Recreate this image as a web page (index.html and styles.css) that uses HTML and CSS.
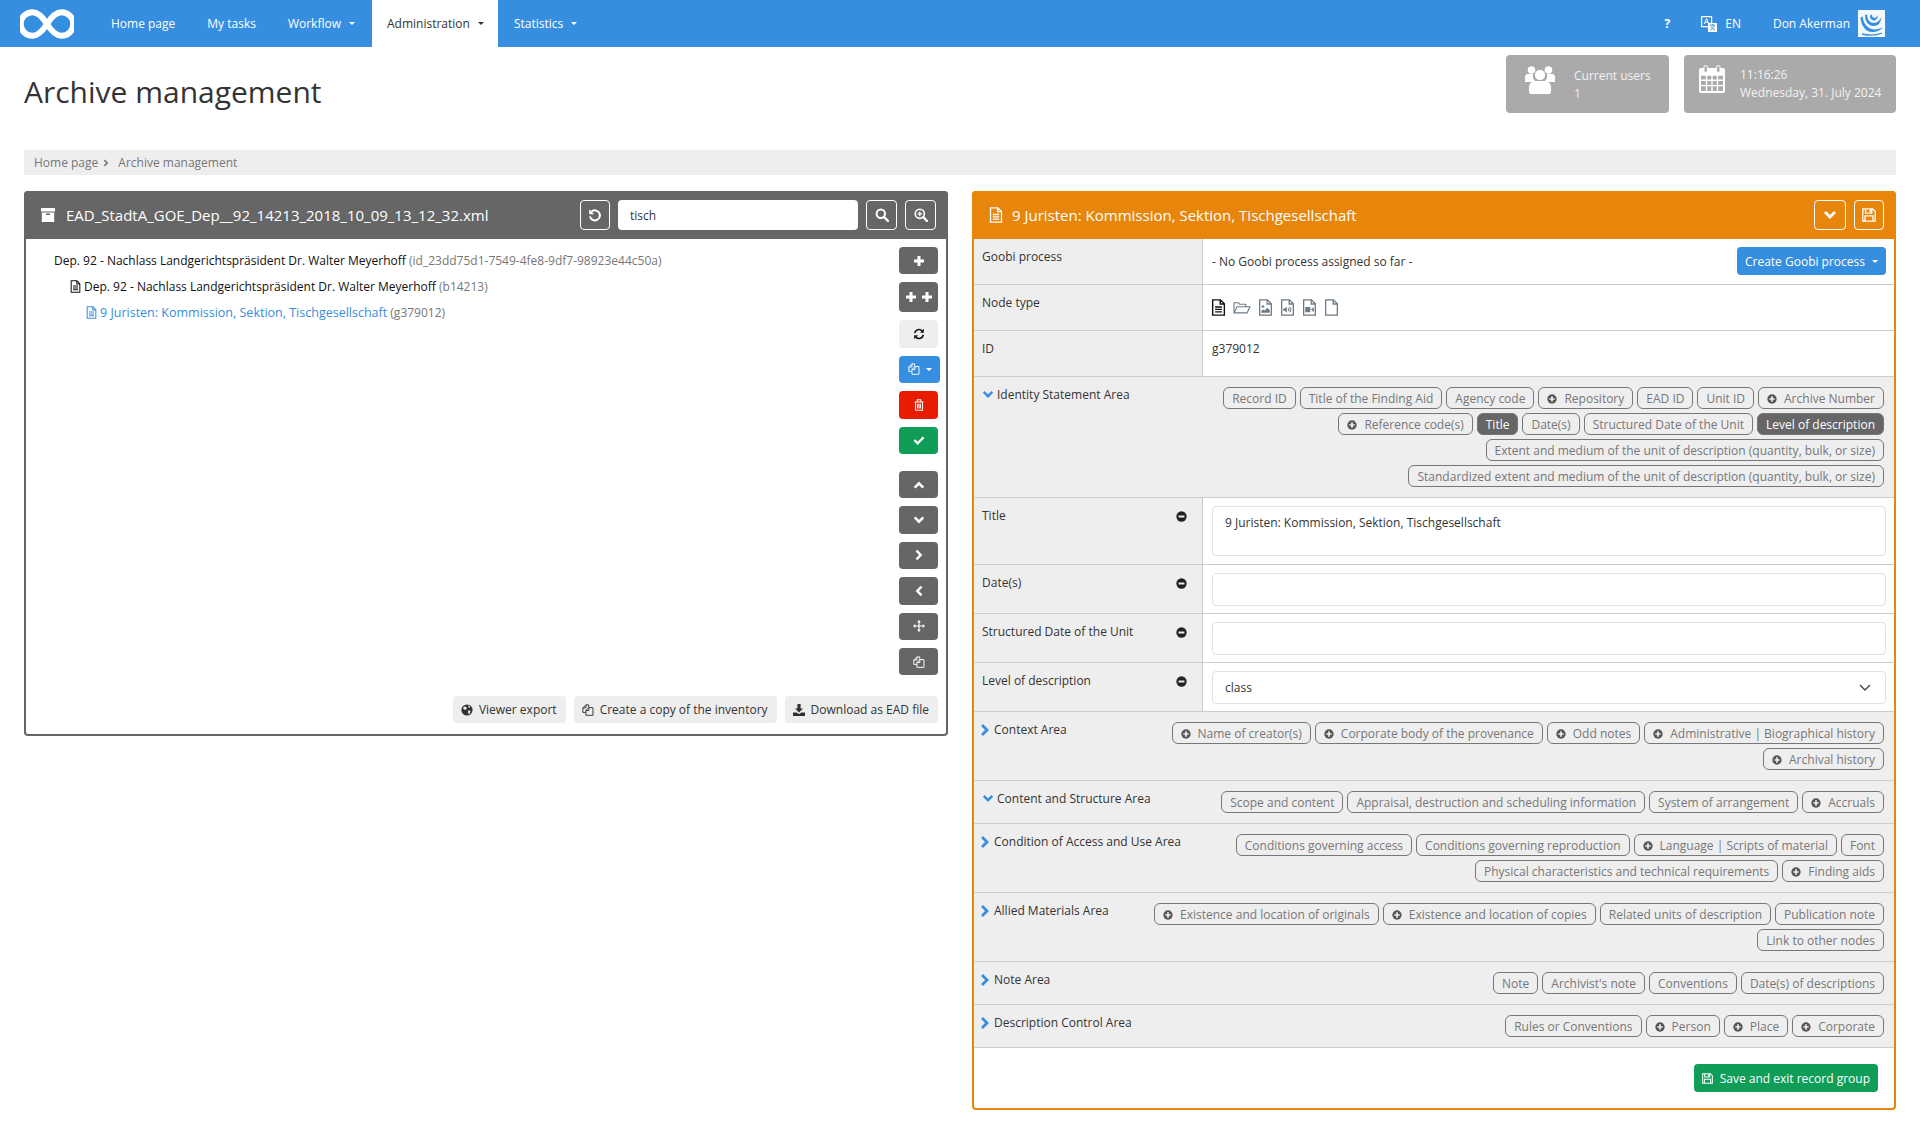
FILE: index.html
```html
<!DOCTYPE html>
<html lang="en">

<head>
    <meta charset="utf-8">
    <title>Archive management</title>
    <link rel="stylesheet" href="styles.css">
</head>

<body>
    <!-- Icons -->
    <svg class="sprite" xmlns="http://www.w3.org/2000/svg">
        <symbol id="i-doc" viewBox="0 0 14 16"><path d="M1.5.8h7.3l3.7 3.7v10.7h-11zM8.6.8v3.9h3.9M3.8 7.5h6.4M3.8 9.8h6.4M3.8 12.1h6.4" fill="none" stroke="currentColor" stroke-width="1.3"/></symbol>
        <symbol id="i-file" viewBox="0 0 14 16"><path d="M1.5.8h7.3l3.7 3.7v10.7h-11zM8.6.8v3.9h3.9" fill="none" stroke="currentColor" stroke-width="1.2"/></symbol>
        <symbol id="i-image" viewBox="0 0 14 16"><path d="M1.5.8h7.3l3.7 3.7v10.7h-11zM8.6.8v3.9h3.9" fill="none" stroke="currentColor" stroke-width="1.2"/><circle cx="4.6" cy="7" r="1.2" fill="currentColor"/><path d="M3 13v-1.6l2-1.6 1.4 1 2.4-2.6 2.2 2.4V13z" fill="currentColor"/></symbol>
        <symbol id="i-audio" viewBox="0 0 14 16"><path d="M1.5.8h7.3l3.7 3.7v10.7h-11zM8.6.8v3.9h3.9" fill="none" stroke="currentColor" stroke-width="1.2"/><path d="M3 9h1.4L6.4 7v6l-2-2H3z" fill="currentColor"/><path d="M7.6 8.6a2 2 0 010 2.8M9 7.6a3.6 3.6 0 010 4.8" fill="none" stroke="currentColor"/></symbol>
        <symbol id="i-video" viewBox="0 0 14 16"><path d="M1.5.8h7.3l3.7 3.7v10.7h-11zM8.6.8v3.9h3.9" fill="none" stroke="currentColor" stroke-width="1.2"/><path d="M3 7.5h4.8v5H3zM8.4 9.8L11 7.5v5z" fill="currentColor"/></symbol>
        <symbol id="i-folder" viewBox="0 0 18 14"><path d="M1 12V2.2h4.4l1.4 1.6h6v2.4M1 12.4l3-6.2h13l-3 6.2z" fill="none" stroke="currentColor" stroke-width="1.1" stroke-linejoin="round"/></symbol>
        <symbol id="i-archive" viewBox="0 0 14 14"><path d="M0 0h14v3.4H0zM.8 4.4h12.4V14H.8z" fill="currentColor"/><path d="M5 6.2h4" stroke="#666" stroke-width="1.4"/></symbol>
        <symbol id="i-undo" viewBox="0 0 14 14"><path d="M3.6 3.6A5 5 0 112 8.4" fill="none" stroke="currentColor" stroke-width="2"/><path d="M1.2 1.2v5h5z" fill="currentColor"/></symbol>
        <symbol id="i-search" viewBox="0 0 14 14"><circle cx="5.8" cy="5.8" r="4.2" fill="none" stroke="currentColor" stroke-width="2"/><path d="M9 9l4 4" stroke="currentColor" stroke-width="2.4" stroke-linecap="round"/></symbol>
        <symbol id="i-zoom" viewBox="0 0 14 14"><circle cx="5.8" cy="5.8" r="4.6" fill="none" stroke="currentColor" stroke-width="1.6"/><path d="M9.2 9.2l3.8 3.8" stroke="currentColor" stroke-width="2.4" stroke-linecap="round"/><path d="M3.4 5.8h4.8M5.8 3.4v4.8" stroke="currentColor" stroke-width="1.3"/></symbol>
        <symbol id="i-plus" viewBox="0 0 12 12"><path d="M6 1v10M1 6h10" stroke="currentColor" stroke-width="3"/></symbol>
        <symbol id="i-sync" viewBox="0 0 14 14"><path d="M2 6a5 5 0 018.6-2.6M12 8a5 5 0 01-8.6 2.6" fill="none" stroke="currentColor" stroke-width="2"/><path d="M12.6 1v4.4H8.2zM1.4 13V8.6h4.4z" fill="currentColor"/></symbol>
        <symbol id="i-copy" viewBox="0 0 14 14"><path d="M4.6 1L1 4.6v5.2h3.6M4.6 1h3.2v3M4.6 1v3.6H1M8 4.2L4.6 7.6v5.6h8.2V4.2zM8 4.2v3.4H4.6" fill="none" stroke="currentColor" stroke-width="1.1" stroke-linejoin="round"/></symbol>
        <symbol id="i-trash" viewBox="0 0 12 14"><path d="M2 4v9h8V4M.8 3.4h10.4M4 3V1h4v2M4.4 5.4v5.6M6 5.4v5.6M7.6 5.4v5.6" fill="none" stroke="currentColor" stroke-width="1.2"/></symbol>
        <symbol id="i-check" viewBox="0 0 14 12"><path d="M1.6 6l3.8 3.8 7-7" fill="none" stroke="currentColor" stroke-width="2.8"/></symbol>
        <symbol id="i-up" viewBox="0 0 14 10"><path d="M2 8l5-5 5 5" fill="none" stroke="currentColor" stroke-width="2.8"/></symbol>
        <symbol id="i-down" viewBox="0 0 14 10"><path d="M2 2l5 5 5-5" fill="none" stroke="currentColor" stroke-width="2.8"/></symbol>
        <symbol id="i-right" viewBox="0 0 10 14"><path d="M2 2l5 5-5 5" fill="none" stroke="currentColor" stroke-width="2.8"/></symbol>
        <symbol id="i-left" viewBox="0 0 10 14"><path d="M8 2L3 7l5 5" fill="none" stroke="currentColor" stroke-width="2.8"/></symbol>
        <symbol id="i-move" viewBox="0 0 14 14"><path d="M7 2v10M2 7h10" stroke="currentColor" stroke-width="1.4"/><path d="M7 0l2.2 2.6H4.8zM7 14l2.2-2.6H4.8zM0 7l2.6-2.2v4.4zM14 7l-2.6-2.2v4.4z" fill="currentColor"/></symbol>
        <symbol id="i-globe" viewBox="0 0 12 12"><circle cx="6" cy="6" r="5.6" fill="currentColor"/><path d="M3 2.4l2.4.6.4 1.8L4.2 6 2 4.6zM7 6.4l2.6.4-.8 2.6-1.4.8zM7.4 1.6l2 1-.8 1.2-1.2-.6z" fill="#eee"/></symbol>
        <symbol id="i-download" viewBox="0 0 12 12"><path d="M4.4 0h3.2v4.4h2.4L6 8.4 2 4.4h2.4zM0 8.6h3.4L6 10l2.6-1.4H12V12H0z" fill="currentColor"/></symbol>
        <symbol id="i-minus" viewBox="0 0 12 12"><circle cx="6" cy="6" r="5.6" fill="currentColor"/><path d="M2.8 4.9h6.4v2.2H2.8z" fill="#eee"/></symbol>
        <symbol id="i-add" viewBox="0 0 12 12"><circle cx="6" cy="6" r="5.6" fill="currentColor"/><path d="M2.8 5h6.4v2H2.8zM5 2.8h2v6.4H5z" fill="#eee"/></symbol>
        <symbol id="i-save" viewBox="0 0 12 12"><path d="M.7.7h8.4l2.2 2.2v8.4H.7zM3 .9v3.4h5.4V.9M2.6 11V6.8h6.8V11" fill="none" stroke="currentColor" stroke-width="1.1"/><path d="M6.4 1.6h1.2v2H6.4z" fill="currentColor"/></symbol>
        <symbol id="i-users" viewBox="0 0 30 29"><circle cx="6.5" cy="5" r="3.8" fill="currentColor"/><circle cx="23.5" cy="5" r="3.8" fill="currentColor"/><path d="M0 17v-5a3 3 0 013-3h5a8 8 0 002 7l-1 1zM30 17v-5a3 3 0 00-3-3h-5a8 8 0 01-2 7l1 1z" fill="currentColor"/><circle cx="15" cy="10" r="5.6" fill="currentColor" stroke="#aaa"/><path d="M4 27v-5a6 6 0 016-6h10a6 6 0 016 6v5a2 2 0 01-2 2H6a2 2 0 01-2-2z" fill="currentColor"/></symbol>
        <symbol id="i-calendar" viewBox="0 0 26 28"><path d="M2 3h22a2 2 0 012 2v21a2 2 0 01-2 2H2a2 2 0 01-2-2V5a2 2 0 012-2z" fill="currentColor"/><path d="M2 10h22v16H2z" fill="#aaa"/><path d="M2 10h22M2 15.3h22M2 20.6h22M7.5 10v16M13 10v16M18.5 10v16" stroke="currentColor" stroke-width="1.4"/><rect x="5" y=".5" width="3.4" height="7" rx="1.7" fill="#aaa" stroke="currentColor"/><rect x="17.6" y=".5" width="3.4" height="7" rx="1.7" fill="#aaa" stroke="currentColor"/></symbol>
        <symbol id="i-translate" viewBox="0 0 16 16"><path d="M.6.6h10v10H.6z" fill="none" stroke="currentColor" stroke-width="1.2"/><path d="M3.4 8l2.2-5.4L7.8 8M4.2 6.2H7" fill="none" stroke="currentColor"/><path d="M7 7h9v9H7z" fill="currentColor"/><path d="M9 9.200h5M11.500 8.200v1M13.400 9.200c-.6 2.400-2.400 4-4.200 4.800M10 10.600c.8 1.600 2.400 2.800 4 3.400" fill="none" stroke="#368ee0"/></symbol>
    </svg>

    <!-- Barra de navegacion -->
    <nav class="navbar">
        <svg class="logo" viewBox="0 0 54 30"><path d="M27 15C22 7 18 3.200 12.500 3.200a11.800 11.800 0 000 23.600c5.500 0 9.500-3.800 14.500-11.800s9-11.800 14.500-11.800a11.800 11.800 0 010 23.600C36 26.800 32 23 27 15z" fill="none" stroke="#fff" stroke-width="6"/></svg>
        <a class="nav-item nav-home">Home page</a>
        <a class="nav-item">My tasks</a>
        <a class="nav-item nav-caret">Workflow</a>
        <a class="nav-item nav-caret nav-active">Administration</a>
        <a class="nav-item nav-caret">Statistics</a>
        <div class="nav-right">
            <span class="nav-help">?</span>
            <svg class="nav-lang"><use href="#i-translate"/></svg>
            <span class="nav-en">EN</span>
            <span class="nav-user">Don Akerman</span>
            <svg class="avatar" viewBox="0 0 27 27"><rect width="27" height="27" fill="#f4f8fd"/><path d="M2.500 7.500C3 16 8 22 14 22c5 0 9-2 11-5-2 1.500-5 2.500-8 2.500C10 19.500 5.500 14 4.500 6.500z" fill="#368ee0"/><path d="M7 5c0 7 4 11 8.500 11S23 13 23.500 6.500c-1 3.500-4 6.500-7.500 6.500C11.500 13 9 9 9 4.500z" fill="#368ee0"/><path d="M13 4.500a3.500 3.500 0 005.500 4.500c1-1 1.500-2.500 1.500-4-1 2-2.500 3-4 2.800-1.200-.2-2-1.200-2-2.800z" fill="#368ee0"/><path d="M4 24c6 1.500 14 1.500 20-1" fill="none" stroke="#368ee0" stroke-width="1.300"/></svg>
        </div>
    </nav>

    <div class="page">
        <div class="title-row">
            <h1>Archive management</h1>
            <div class="widgets">
                <div class="widget widget-users">
                    <svg class="widget-icon"><use href="#i-users"/></svg>
                    <div class="widget-text"><span>Current users</span><span>1</span></div>
                </div>
                <div class="widget widget-time">
                    <svg class="widget-icon widget-cal"><use href="#i-calendar"/></svg>
                    <div class="widget-text"><span>11:16:26</span><span>Wednesday, 31. July 2024</span></div>
                </div>
            </div>
        </div>

        <div class="breadcrumb"><span>Home page</span><svg class="crumb-sep"><use href="#i-right"/></svg><span>Archive management</span></div>

        <div class="panels">
            <!-- Arbol del inventario -->
            <section class="panel panel-tree">
                <header class="panel-head">
                    <svg class="head-icon"><use href="#i-archive"/></svg>
                    <span class="head-title">EAD_StadtA_GOE_Dep__92_14213_2018_10_09_13_12_32.xml</span>
                    <button class="head-btn head-narrow"><svg class="ico"><use href="#i-undo"/></svg></button>
                    <input class="search" type="text" value="tisch">
                    <button class="head-btn"><svg class="ico"><use href="#i-search"/></svg></button>
                    <button class="head-btn"><svg class="ico"><use href="#i-zoom"/></svg></button>
                </header>
                <div class="tree-body">
                    <div class="tree">
                        <div class="node">Dep. 92 - Nachlass Landgerichtspräsident Dr. Walter Meyerhoff <span class="node-id">(id_23dd75d1-7549-4fe8-9df7-98923e44c50a)</span></div>
                        <div class="node node-2"><svg class="node-icon"><use href="#i-doc"/></svg>Dep. 92 - Nachlass Landgerichtspräsident Dr. Walter Meyerhoff <span class="node-id">(b14213)</span></div>
                        <div class="node node-3"><svg class="node-icon"><use href="#i-doc"/></svg><span class="node-link">9 Juristen: Kommission, Sektion, Tischgesellschaft</span> <span class="node-id">(g379012)</span></div>
                    </div>
                    <div class="tools">
                        <button class="tool"><svg class="ico"><use href="#i-plus"/></svg></button>
                        <button class="tool tool-tall"><svg class="ico"><use href="#i-plus"/></svg><svg class="ico"><use href="#i-plus"/></svg></button>
                        <button class="tool tool-light"><svg class="ico"><use href="#i-sync"/></svg></button>
                        <button class="tool tool-blue"><svg class="ico"><use href="#i-copy"/></svg><i class="caret"></i></button>
                        <button class="tool tool-red"><svg class="ico"><use href="#i-trash"/></svg></button>
                        <button class="tool tool-green"><svg class="ico"><use href="#i-check"/></svg></button>
                        <button class="tool tool-split"><svg class="ico"><use href="#i-up"/></svg></button>
                        <button class="tool"><svg class="ico"><use href="#i-down"/></svg></button>
                        <button class="tool"><svg class="ico"><use href="#i-right"/></svg></button>
                        <button class="tool"><svg class="ico"><use href="#i-left"/></svg></button>
                        <button class="tool"><svg class="ico"><use href="#i-move"/></svg></button>
                        <button class="tool"><svg class="ico"><use href="#i-copy"/></svg></button>
                    </div>
                </div>
                <div class="tree-foot">
                    <button class="foot-btn"><svg class="ico"><use href="#i-globe"/></svg>Viewer export</button>
                    <button class="foot-btn"><svg class="ico"><use href="#i-copy"/></svg>Create a copy of the inventory</button>
                    <button class="foot-btn"><svg class="ico"><use href="#i-download"/></svg>Download as EAD file</button>
                </div>
            </section>

            <!-- Detalle del nodo -->
            <section class="panel panel-edit">
                <header class="panel-head">
                    <svg class="head-icon head-doc"><use href="#i-doc"/></svg>
                    <span class="head-title">9 Juristen: Kommission, Sektion, Tischgesellschaft</span>
                    <button class="head-btn head-chev"><svg class="ico"><use href="#i-down"/></svg></button>
                    <button class="head-btn head-narrow"><svg class="ico"><use href="#i-save"/></svg></button>
                </header>

                <div class="row">
                    <div class="label">Goobi process</div>
                    <div class="value value-goobi"><span>- No Goobi process assigned so far -</span><button class="goobi-btn">Create Goobi process<i class="caret"></i></button></div>
                </div>
                <div class="row">
                    <div class="label">Node type</div>
                    <div class="value value-type">
                        <svg class="type type-on"><use href="#i-doc"/></svg>
                        <svg class="type type-wide"><use href="#i-folder"/></svg>
                        <svg class="type"><use href="#i-image"/></svg>
                        <svg class="type"><use href="#i-audio"/></svg>
                        <svg class="type"><use href="#i-video"/></svg>
                        <svg class="type"><use href="#i-file"/></svg>
                    </div>
                </div>
                <div class="row">
                    <div class="label">ID</div>
                    <div class="value">g379012</div>
                </div>

                <div class="area">
                    <div class="area-name"><svg class="area-arrow"><use href="#i-down"/></svg>Identity Statement Area</div>
                    <div class="tags">
                        <span class="tag">Record ID</span><span class="tag">Title of the Finding Aid</span><span class="tag">Agency code</span><span class="tag"><svg class="ico"><use href="#i-add"/></svg>Repository</span><span class="tag">EAD ID</span><span class="tag">Unit ID</span><span class="tag"><svg class="ico"><use href="#i-add"/></svg>Archive Number</span><span class="tag"><svg class="ico"><use href="#i-add"/></svg>Reference code(s)</span><span class="tag tag-on">Title</span><span class="tag">Date(s)</span><span class="tag">Structured Date of the Unit</span><span class="tag tag-on">Level of description</span><span class="tag">Extent and medium of the unit of description (quantity, bulk, or size)</span><span class="tag">Standardized extent and medium of the unit of description (quantity, bulk, or size)</span>
                    </div>
                </div>

                <div class="row row-field row-title">
                    <div class="label">Title<svg class="minus"><use href="#i-minus"/></svg></div>
                    <div class="value"><div class="field field-area">9 Juristen: Kommission, Sektion, Tischgesellschaft</div></div>
                </div>
                <div class="row row-field">
                    <div class="label">Date(s)<svg class="minus"><use href="#i-minus"/></svg></div>
                    <div class="value"><div class="field"></div></div>
                </div>
                <div class="row row-field">
                    <div class="label">Structured Date of the Unit<svg class="minus"><use href="#i-minus"/></svg></div>
                    <div class="value"><div class="field"></div></div>
                </div>
                <div class="row row-field">
                    <div class="label">Level of description<svg class="minus"><use href="#i-minus"/></svg></div>
                    <div class="value"><div class="field field-select">class<svg class="select-arrow" viewBox="0 0 14 10"><path d="M2 2l5 5 5-5" fill="none" stroke="currentColor" stroke-width="1.4"/></svg></div></div>
                </div>

                <div class="area">
                    <div class="area-name"><svg class="area-arrow arrow-side"><use href="#i-right"/></svg>Context Area</div>
                    <div class="tags">
                        <span class="tag"><svg class="ico"><use href="#i-add"/></svg>Name of creator(s)</span><span class="tag"><svg class="ico"><use href="#i-add"/></svg>Corporate body of the provenance</span><span class="tag"><svg class="ico"><use href="#i-add"/></svg>Odd notes</span><span class="tag"><svg class="ico"><use href="#i-add"/></svg>Administrative | Biographical history</span><span class="tag"><svg class="ico"><use href="#i-add"/></svg>Archival history</span>
                    </div>
                </div>
                <div class="area">
                    <div class="area-name"><svg class="area-arrow"><use href="#i-down"/></svg>Content and Structure Area</div>
                    <div class="tags">
                        <span class="tag">Scope and content</span><span class="tag">Appraisal, destruction and scheduling information</span><span class="tag">System of arrangement</span><span class="tag"><svg class="ico"><use href="#i-add"/></svg>Accruals</span>
                    </div>
                </div>
                <div class="area">
                    <div class="area-name"><svg class="area-arrow arrow-side"><use href="#i-right"/></svg>Condition of Access and Use Area</div>
                    <div class="tags">
                        <span class="tag">Conditions governing access</span><span class="tag">Conditions governing reproduction</span><span class="tag"><svg class="ico"><use href="#i-add"/></svg>Language | Scripts of material</span><span class="tag">Font</span><span class="tag">Physical characteristics and technical requirements</span><span class="tag"><svg class="ico"><use href="#i-add"/></svg>Finding aids</span>
                    </div>
                </div>
                <div class="area">
                    <div class="area-name"><svg class="area-arrow arrow-side"><use href="#i-right"/></svg>Allied Materials Area</div>
                    <div class="tags">
                        <span class="tag"><svg class="ico"><use href="#i-add"/></svg>Existence and location of originals</span><span class="tag"><svg class="ico"><use href="#i-add"/></svg>Existence and location of copies</span><span class="tag">Related units of description</span><span class="tag">Publication note</span><span class="tag">Link to other nodes</span>
                    </div>
                </div>
                <div class="area">
                    <div class="area-name"><svg class="area-arrow arrow-side"><use href="#i-right"/></svg>Note Area</div>
                    <div class="tags">
                        <span class="tag">Note</span><span class="tag">Archivist's note</span><span class="tag">Conventions</span><span class="tag">Date(s) of descriptions</span>
                    </div>
                </div>
                <div class="area">
                    <div class="area-name"><svg class="area-arrow arrow-side"><use href="#i-right"/></svg>Description Control Area</div>
                    <div class="tags">
                        <span class="tag">Rules or Conventions</span><span class="tag"><svg class="ico"><use href="#i-add"/></svg>Person</span><span class="tag"><svg class="ico"><use href="#i-add"/></svg>Place</span><span class="tag"><svg class="ico"><use href="#i-add"/></svg>Corporate</span>
                    </div>
                </div>

                <div class="edit-foot">
                    <button class="save-btn"><svg class="ico"><use href="#i-save"/></svg>Save and exit record group</button>
                </div>
            </section>
        </div>
    </div>
</body>
</html>
```

FILE: styles.css
```css
/* Estilos generales */
* {
    box-sizing: border-box;
}

body {
    margin: 0;
    background: #fff;
    color: #333;
    font-family: "Open Sans", sans-serif;
    font-size: 12px;
    line-height: 18px;
}

button {
    font-family: inherit;
    font-size: inherit;
    cursor: pointer;
}

.sprite {
    display: none;
}

.ico {
    width: 14px;
    height: 14px;
    flex: none;
}

.caret {
    display: inline-block;
    width: 0;
    height: 0;
    margin-left: 7px;
    border-top: 3px solid currentColor;
    border-left: 3px solid transparent;
    border-right: 3px solid transparent;
}

/* Barra de navegacion */
.navbar {
    display: flex;
    align-items: stretch;
    height: 47px;
    background: #368ee0;
    color: #fff;
}

.logo {
    width: 54px;
    height: 30px;
    margin: 9px 0 0 20px;
}

.nav-item {
    display: flex;
    align-items: center;
    padding: 0 16px;
}

.nav-home {
    margin-left: 21px;
}

.nav-caret {
    padding-right: 15px;
}

.nav-caret::after {
    content: "";
    margin-left: 8px;
    border-top: 3px solid currentColor;
    border-left: 3px solid transparent;
    border-right: 3px solid transparent;
}

.nav-active {
    margin-left: 2px;
    padding-left: 15px;
    padding-right: 14px;
    background: #fff;
    color: #333;
}

.nav-right {
    display: flex;
    align-items: center;
    margin-left: auto;
    padding-right: 35px;
}

.nav-help {
    font-weight: 700;
}

.nav-lang {
    width: 16px;
    height: 16px;
    margin-left: 31px;
}

.nav-en {
    margin-left: 8px;
}

.nav-user {
    margin-left: 32px;
}

.avatar {
    width: 27px;
    height: 27px;
    margin-left: 8px;
}

/* Cabecera de la pagina */
.page {
    padding: 0 24px;
}

.title-row {
    display: flex;
    justify-content: space-between;
    height: 103px;
    padding-top: 8px;
}

h1 {
    margin: 16px 0 0;
    font-size: 30px;
    font-weight: 400;
    line-height: 42px;
    color: #333;
}

.widgets {
    display: flex;
    gap: 15px;
}

.widget {
    display: flex;
    height: 58px;
    background: #aaa;
    border-radius: 4px;
    color: #fff;
}

.widget-users {
    width: 163px;
    padding: 10px 0 0 19px;
}

.widget-time {
    width: 212px;
    padding: 10px 0 0 15px;
}

.widget-icon {
    width: 30px;
    height: 29px;
    margin-right: 19px;
}

.widget-cal {
    width: 26px;
    height: 28px;
    margin-right: 15px;
}

.widget-text {
    display: flex;
    flex-direction: column;
    color: #f2f2f2;
}

.widget-text span {
    line-height: 18px;
}

.widget-users .widget-text {
    margin-top: 2px;
}

.widget-time .widget-text {
    margin-top: 1px;
}

.breadcrumb {
    display: flex;
    align-items: center;
    height: 25px;
    padding-left: 10px;
    background: #eee;
    color: #777;
}

.crumb-sep {
    width: 6px;
    height: 8px;
    margin: 0 9px 0 5px;
}

.panels {
    display: grid;
    grid-template-columns: 924px 924px;
    gap: 24px;
    align-items: start;
    margin-top: 16px;
}

/* Paneles */
.panel {
    border: 2px solid #666;
    border-radius: 4px;
    background: #fff;
}

.panel-edit {
    height: 919px;
    border-color: #e8860c;
}

.panel-head {
    display: flex;
    align-items: center;
    height: 48px;
    margin: -2px -2px 0;
    padding: 0 12px 0 17px;
    background: #666;
    border-radius: 4px 4px 0 0;
    color: #fff;
}

.panel-edit .panel-head {
    background: #e8860c;
}

.head-icon {
    width: 14px;
    height: 14px;
    margin-right: 11px;
    margin-top: -1px;
}

.head-doc {
    height: 16px;
    margin-right: 9px;
}

.head-title {
    flex: 1;
    font-size: 15px;
}

.head-btn {
    display: flex;
    align-items: center;
    justify-content: center;
    width: 31px;
    height: 30px;
    margin-left: 8px;
    padding: 0;
    border: 1px solid #fff;
    border-radius: 4px;
    background: transparent;
    color: #fff;
}

.head-narrow {
    width: 30px;
}

.head-chev {
    width: 32px;
}

.search {
    width: 240px;
    height: 30px;
    margin-left: 8px;
    padding: 0 12px;
    border: 0;
    border-radius: 4px;
    font-family: inherit;
    font-size: 12px;
    color: #333;
}

/* Arbol */
.tree-body {
    display: flex;
    height: 457px;
}

.tree {
    flex: 1;
    padding: 9px 0 0 28px;
    color: #111;
}

.node {
    height: 26px;
    line-height: 26px;
    white-space: nowrap;
}

.node-id {
    color: #777;
}

.node-2 {
    padding-left: 16px;
}

.node-3 {
    padding-left: 32px;
}

.node-icon {
    width: 11px;
    height: 13px;
    margin-right: 3px;
    vertical-align: -2px;
}

.node-link {
    color: #368ee0;
    font-size: 12.5px;
}

.node-3 .node-icon {
    color: #368ee0;
}

.tools {
    display: flex;
    flex-direction: column;
    align-items: flex-start;
    gap: 8px;
    width: 47px;
    padding-top: 8px;
}

.tool {
    display: flex;
    align-items: center;
    justify-content: center;
    gap: 4px;
    flex: none;
    width: 39px;
    height: 27.4px;
    padding: 0;
    border: 0;
    border-radius: 4px;
    background: #666;
    color: #fff;
}

.tool .ico {
    width: 12px;
    height: 12px;
}

.tool-tall {
    height: 30px;
}

.tool-light {
    background: #eee;
    color: #111;
}

.tool-blue {
    width: 41px;
    background: #368ee0;
}

.tool-blue .caret {
    margin-left: 2px;
}

.tool-red {
    background: #e81c00;
}

.tool-green {
    background: #0f9d58;
}

.tool-split {
    margin-top: 9px;
}

.tree-foot {
    display: flex;
    justify-content: flex-end;
    gap: 8px;
    padding: 0 8px 11px 0;
}

.foot-btn {
    display: flex;
    align-items: center;
    gap: 6px;
    height: 27px;
    padding: 0 9px 0 8px;
    border: 0;
    border-radius: 4px;
    background: #eee;
    color: #333;
}

.foot-btn .ico {
    width: 12px;
    height: 12px;
}

/* Filas del formulario */
.row {
    display: flex;
    height: 46px;
    border-bottom: 1px solid #ccc;
}

.label {
    display: flex;
    justify-content: space-between;
    flex: none;
    width: 229px;
    padding: 9px 15px 0 8px;
    background: #eee;
    border-right: 1px solid #ccc;
}

.value {
    flex: 1;
    min-width: 0;
    padding: 9px 8px 0 9px;
}

.value-goobi {
    display: flex;
    justify-content: space-between;
    align-items: center;
    padding-top: 0;
}

.goobi-btn {
    display: flex;
    align-items: center;
    justify-content: center;
    flex: none;
    width: 149px;
    height: 28px;
    margin-top: -1px;
    padding: 0;
    border: 0;
    border-radius: 4px;
    background: #368ee0;
    color: #fff;
    white-space: nowrap;
}

.value-type {
    display: flex;
    align-items: center;
    gap: 7px;
    padding: 0 0 0 8px;
}

.type {
    width: 15px;
    height: 17px;
    color: #6d7a85;
}

.type-on {
    color: #111;
}

.type-wide {
    width: 18px;
    height: 15px;
}

.minus {
    width: 11px;
    height: 11px;
    margin-top: 4px;
    color: #222;
}

.row-field {
    height: 49px;
}

.row-field .value {
    padding-top: 8px;
}

.row-title {
    height: 67px;
}

.field {
    height: 33px;
    padding: 0 12px;
    border: 1px solid #dfe1e8;
    border-radius: 4px;
    background: #fff;
    line-height: 31px;
}

.field-area {
    height: 50px;
    padding-top: 7px;
    line-height: 18px;
}

.field-select {
    display: flex;
    justify-content: space-between;
    align-items: center;
}

.select-arrow {
    width: 14px;
    height: 10px;
    margin-right: 1px;
    color: #444;
}

/* Areas */
.area {
    display: flex;
    padding: 10px 10px 10px 8px;
    background: #eee;
    border-bottom: 1px solid #ccc;
}

.area-name {
    display: flex;
    flex: none;
    align-items: flex-start;
    margin-top: -1px;
    white-space: nowrap;
}

.area-arrow {
    width: 12px;
    height: 9px;
    margin: 4px 3px 0 0;
    color: #368ee0;
}

.arrow-side {
    width: 10px;
    height: 14px;
    margin: 2px 4px 0 -2px;
}

.tags {
    display: flex;
    flex-wrap: wrap;
    justify-content: flex-end;
    gap: 4px;
    flex: 1;
    max-width: 770px;
    margin-left: auto;
    padding-left: 20px;
}

.tag {
    display: flex;
    align-items: center;
    height: 22px;
    padding: 1px 8px 0;
    border: 1px solid #777;
    border-radius: 6px;
    color: #777;
    white-space: nowrap;
}

.tag .ico {
    width: 10px;
    height: 10px;
    margin-right: 7px;
    color: #555;
}

.tag-on {
    background: #666;
    color: #fff;
}

.edit-foot {
    display: flex;
    justify-content: flex-end;
    padding: 16px 16px 0 0;
}

.save-btn {
    display: flex;
    align-items: center;
    gap: 7px;
    height: 28px;
    padding: 0 8px;
    border: 0;
    border-radius: 4px;
    background: #0f9d58;
    color: #fff;
}

.save-btn .ico {
    width: 11px;
    height: 11px;
}
```
